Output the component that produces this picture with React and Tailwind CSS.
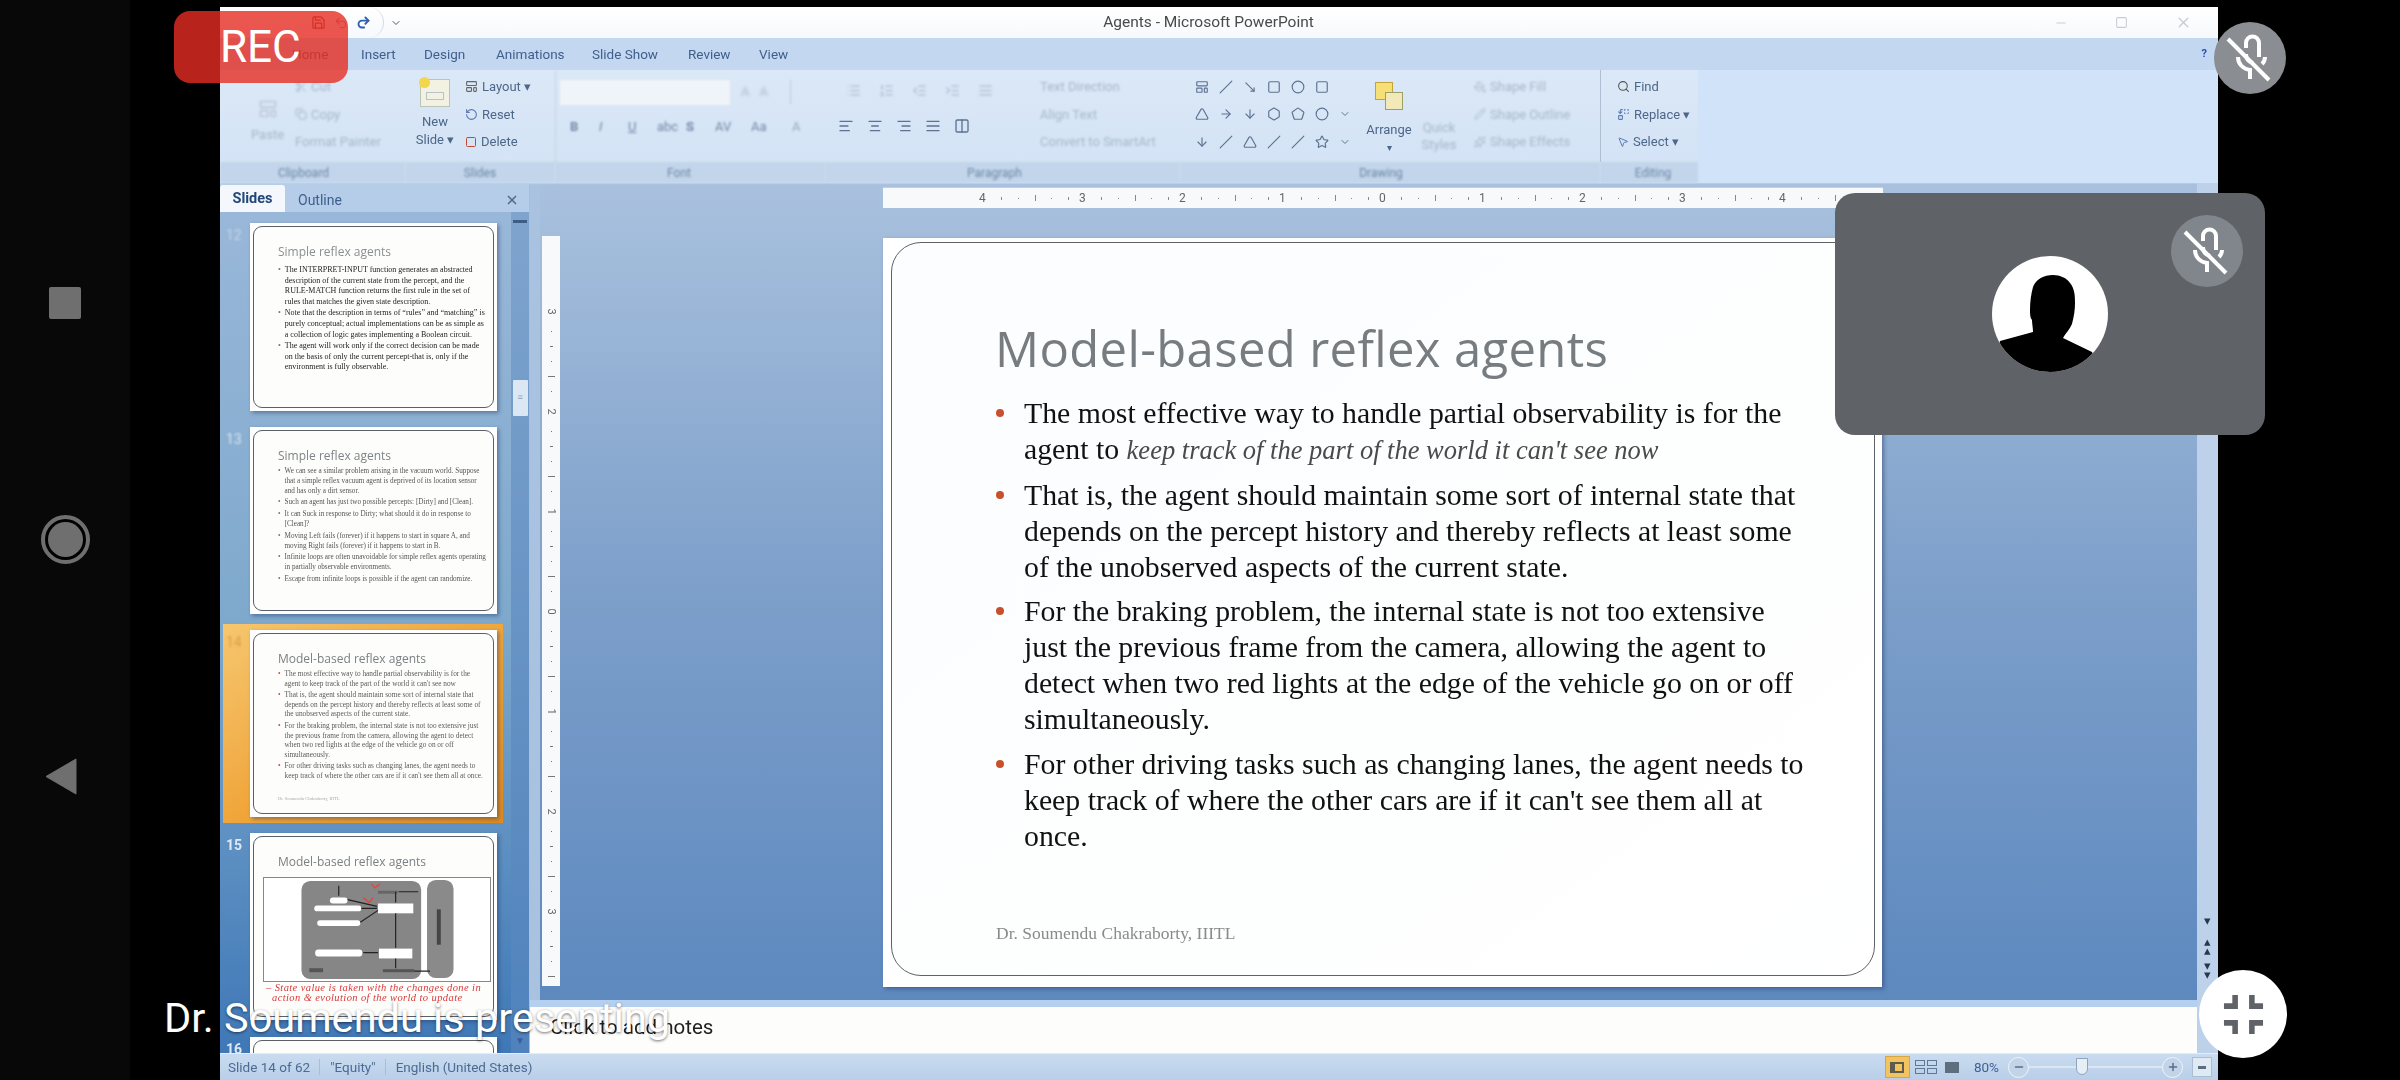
import React from "react";
import {
  Scissors, Copy, AlignLeft, AlignCenter, AlignRight, AlignJustify, Columns2, List, ListOrdered, Indent, Outdent,
  Square, Circle, Slash, Triangle, Star, ArrowRight, ArrowDown, Hexagon, Pentagon, MoveRight, ChevronDown, X, Minus, Plus,
  Search, Replace, MousePointer2, PaintBucket, Pencil, Sparkles, LayoutTemplate, RotateCcw, Redo2, Undo2, Save,
} from "lucide-react";

const MAIN = [
  [<>The most effective way to handle partial observability is for the</>, <>agent to <i className="text-[26.5px] text-[#4a4a4a]">keep track of the part of the world it can't see now</i></>],
  ["That is, the agent should maintain some sort of internal state that", "depends on the percept history and thereby reflects at least some", "of the unobserved aspects of the current state."],
  ["For the braking problem, the internal state is not too extensive", "just the previous frame from the camera, allowing the agent to", "detect when two red lights at the edge of the vehicle go on or off", "simultaneously."],
  ["For other driving tasks such as changing lanes, the agent needs to", "keep track of where the other cars are if it can't see them all at", "once."],
];

function MicOffIcon() {
  return (
    <svg viewBox="0 0 72 72" className="w-[72px] h-[72px]" fill="none" stroke="white" strokeWidth="4" strokeLinecap="butt">
      <path d="M32 26v-5a6.5 6.5 0 0 1 13 0v14" />
      <path d="M51 35c0 3-1 5-3 7" />
      <path d="M24 35c0 7 5 12 12 13v9" />
      <path d="M32 32c0 5 3 8 7 9" />
      <path d="M14 17l41 41" />
    </svg>
  );
}

function Avatar() {
  return (
    <svg viewBox="0 0 116 116" className="w-[116px] h-[116px]">
      <defs><clipPath id="avc"><circle cx="58" cy="58" r="58" /></clipPath></defs>
      <circle cx="58" cy="58" r="58" fill="white" />
      <path clipPath="url(#avc)" fill="black" d="M61 19C68 19 75 22 78 27C83 33 83 41 83 47C83 54 82 60 80 68C78 73 73 78 71 82L100 96L110 116H0L8 85L41 76C41 72 40 68 40 64C38 62 38 58 38 54C38 46 39 38 41 31C44 23 52 19 61 19Z" />
    </svg>
  );
}

function Thumb({ title, paras, className, titleClass, bodyClass, paraClass = "mb-[1px]", selected, children, footer }) {
  return (
    <div className={`w-[247px] bg-white p-[3px] shadow-[2px_2px_4px_rgba(30,50,90,0.45)] shrink-0 ${className}`}>
      <div className="h-full border-[1.5px] border-[#596066] rounded-[9px] pl-[24px] pr-[6px] pt-[16px] overflow-hidden bg-[#fdfdfb]">
        <div className={`font-['Open_Sans',sans-serif] text-[12px] leading-[18px] whitespace-nowrap blur-[0.5px] ${titleClass}`}>{title}</div>
        {paras && (
          <div className={`font-['Liberation_Serif',serif] blur-[0.55px] ${bodyClass}`}>
            {paras.map((p, i) => (
              <div key={i} className={`flex gap-[4px] ${paraClass}`}>
                <span className={selected ? "text-[#c8502c]" : "text-[#777]"}>•</span>
                <span>{p}</span>
              </div>
            ))}
          </div>
        )}
        {children}
        {footer && <div className="font-['Liberation_Serif',serif] text-[4.5px] text-[#aaa] mt-[15px] blur-[0.5px] whitespace-nowrap">Dr. Soumendu Chakraborty, IIITL</div>}
      </div>
    </div>
  );
}

function Diagram() {
  return (
    <svg viewBox="0 0 228 105" className="w-[228px] h-[105px] bg-white border border-[#888] blur-[0.5px] -ml-[15px] mt-[6px] shrink-0">
      <rect x="37" y="3" width="122" height="100" rx="9" fill="#868686" />
      <rect x="165" y="2" width="27" height="100" rx="9" fill="#8a8a8a" />
      <rect x="66" y="20" width="18" height="6" rx="3" fill="white" />
      <rect x="50" y="28" width="48" height="6" rx="3" fill="white" />
      <rect x="53" y="43" width="44" height="6" rx="3" fill="white" />
      <rect x="115" y="26" width="36" height="10" fill="white" />
      <rect x="51" y="73" width="48" height="7" rx="3" fill="white" />
      <rect x="116" y="72" width="34" height="10" fill="white" />
      <rect x="115" y="13" width="20" height="3" fill="#666" />
      <rect x="120" y="93" width="32" height="3" fill="#555" />
      <path d="M75 8v10M84 22l30 7M98 31h16M97 45l18-12M133 36v35M100 76h15M133 82v10M136 14h20M152 95h16M133 14v11" stroke="#222" strokeWidth="1.2" fill="none" />
      <path d="M100 20l6 5 4-5M108 6l4 4 5-4" stroke="#e2473f" strokeWidth="1.4" fill="none" />
      <rect x="175" y="32" width="4" height="36" fill="#444" />
      <rect x="45" y="92" width="14" height="4" fill="#555" />
    </svg>
  );
}

function RibbonLine({ icon, children, className = "" }) {
  return (
    <div className={`h-[27.5px] flex items-center gap-[4px] whitespace-nowrap ${className}`}>
      {icon}
      <span>{children}</span>
    </div>
  );
}

function Group({ width, label, children, className = "", labelClass = "" }) {
  return (
    <div className={`flex flex-col shrink-0 ${width}`}>
      <div className={`h-[92px] pt-[3px] flex ${className}`}>{children}</div>
      <div className={`h-[21px] bg-[#c2d5ea] flex items-center justify-center text-[12px] text-[#6d88a9] blur-[0.8px] ${labelClass}`}>{label}</div>
    </div>
  );
}

function TitleBar() {
  return (
    <div className="h-[31px] bg-gradient-to-b from-[#ffffff] to-[#f6f9fd] flex items-center relative shrink-0">
      <div className="w-[164px] h-[31px] flex items-center justify-end pr-[12px] gap-[8px] border-r border-[#d5dbe4] rounded-r-[16px] text-[#2f5fb0]">
        <Save size={15} className="text-[#9b3a3a] blur-[0.6px]" />
        <Undo2 size={14} className="text-[#b08a8a] blur-[0.6px]" />
        <Redo2 size={15} strokeWidth={3} className="blur-[0.5px]" />
      </div>
      <ChevronDown size={12} className="ml-[6px] text-[#555] blur-[0.4px]" />
      <div className="flex-1 text-center pr-[39px] font-['Roboto',sans-serif] text-[15.5px] text-[#4a4a4a] blur-[0.4px]">Agents - Microsoft PowerPoint</div>
      <div className="flex items-center gap-[47px] pr-[26px] text-[#c9ced6] blur-[0.5px]">
        <Minus size={14} />
        <Square size={13} />
        <X size={17} />
      </div>
    </div>
  );
}

function Tabs() {
  const tabs = [["Home", "w-[69px]"], ["Insert", "w-[63px]"], ["Design", "w-[72px]"], ["Animations", "w-[96px]"], ["Slide Show", "w-[96px]"], ["Review", "w-[71px]"], ["View", "w-[50px]"]];
  return (
    <div className="h-[32px] bg-[#c3d8f0] flex items-center font-['Roboto',sans-serif] text-[13.5px] text-[#3f5f8c] shrink-0 relative">
      <div className="flex items-center blur-[0.5px] pl-[72px]">
        {tabs.map(([t, w]) => <span key={t} className={`${w} whitespace-nowrap`}>{t}</span>)}
      </div>
      <span className="ml-auto mr-[11px] text-[11px] font-bold text-[#2a4bb0] blur-[0.5px]">?</span>
    </div>
  );
}

function Ribbon() {
  const faint = "text-[#a7b7ca] blur-[1px]";
  const ic = "text-[#5c7392] blur-[0.7px]";
  const fin = "text-[#aebdd0] blur-[0.9px]";
  return (
    <div className="h-[113px] bg-gradient-to-b from-[#dbe8f7] to-[#d2e2f5] flex font-['Roboto',sans-serif] text-[13px] text-[#4d6789] shrink-0">
      <Group width="w-[185px]" label="Clipboard" labelClass="pr-[18px]" className={`pl-[20px] ${faint}`}>
        <div className="w-[55px] flex flex-col items-center pt-[26px]">
          <LayoutTemplate size={20} className="text-[#bcc8d8]" />
          <span className="mt-[6px]">Paste</span>
        </div>
        <div className="flex flex-col">
          <RibbonLine icon={<Scissors size={12} />}>Cut</RibbonLine>
          <RibbonLine icon={<Copy size={12} />}>Copy</RibbonLine>
          <RibbonLine>Format Painter</RibbonLine>
        </div>
      </Group>
      <Group width="w-[150px]" label="Slides">
        <div className="w-[60px] flex flex-col items-center pt-[6px] leading-[18px] blur-[0.6px]">
          <div className="w-[30px] h-[28px] bg-[#f3f1e2] border border-[#bcc4b8] relative mb-[6px]">
            <div className="absolute -left-[2px] -top-[3px] w-[11px] h-[11px] rounded-full bg-[#f3d649]" />
            <div className="absolute left-[5px] right-[5px] top-[12px] h-[8px] border border-[#b9c2c7]" />
          </div>
          <span>New</span>
          <span className="whitespace-nowrap">Slide ▾</span>
        </div>
        <div className="flex flex-col blur-[0.6px]">
          <RibbonLine icon={<LayoutTemplate size={13} className="text-[#666]" />}>Layout ▾</RibbonLine>
          <RibbonLine icon={<RotateCcw size={13} className="text-[#5a7bb0]" />}>Reset</RibbonLine>
          <RibbonLine icon={<Square size={12} className="text-[#c24a3a]" />}>Delete</RibbonLine>
        </div>
      </Group>
      <Group width="w-[270px]" label="Font" labelClass="pr-[22px]" className="flex-col border-l border-[#c5d4e5] pl-[3px] blur-[0.8px]">
        <div className="h-[38px] flex items-center gap-[10px]">
          <div className="w-[172px] h-[27px] bg-[#eef4f9] border border-[#dde6ef]" />
          <span className={fin}>A</span>
          <span className={fin}>A</span>
          <span className="w-[1px] h-[24px] bg-[#bccbdc] ml-[12px]" />
        </div>
        <div className="h-[32px] flex items-center pl-[11px] text-[13px] text-[#7288a5]">
          <b className="w-[29px]">B</b><i className="w-[29px]">I</i><u className="w-[29px]">U</u><span className="w-[29px]">abc</span><b className="w-[29px]">S</b><span className="w-[36px]">AV</span><span className="w-[41px]">Aa</span><span className="text-[#9aa9bd]">A</span>
        </div>
      </Group>
      <Group width="w-[355px]" label="Paragraph" className="pl-[13px]" labelClass="pr-[16px]">
        <div className="flex flex-col w-[206px]">
          <div className={`h-[34px] flex items-center gap-[18px] pl-[8px] ${fin}`}>
            <List size={15} /><ListOrdered size={15} /><Outdent size={15} /><Indent size={15} /><AlignJustify size={15} />
          </div>
          <div className={`h-[30px] mt-[4px] flex items-center gap-[13px] ${ic}`}>
            <AlignLeft size={16} /><AlignCenter size={16} /><AlignRight size={16} /><AlignJustify size={16} /><Columns2 size={16} />
          </div>
        </div>
        <div className={`flex flex-col -ml-[4px] ${faint}`}>
          <RibbonLine>Text Direction</RibbonLine>
          <RibbonLine>Align Text</RibbonLine>
          <RibbonLine>Convert to SmartArt</RibbonLine>
        </div>
      </Group>
      <Group width="w-[420px]" label="Drawing" labelClass="pr-[18px]" className="pl-[15px]">
        <div className={`w-[170px] flex flex-col ${ic}`}>
          <div className="h-[27.5px] flex items-center gap-[10px]"><LayoutTemplate size={14} /><Slash size={14} /><MoveRight size={14} className="rotate-45" /><Square size={14} /><Circle size={14} /><Square size={14} /></div>
          <div className="h-[27.5px] flex items-center gap-[10px]"><Triangle size={14} /><ArrowRight size={14} /><ArrowDown size={14} /><Hexagon size={14} /><Pentagon size={14} /><Circle size={14} /><ChevronDown size={12} /></div>
          <div className="h-[27.5px] flex items-center gap-[10px]"><ArrowDown size={14} /><Slash size={14} /><Triangle size={14} /><Slash size={14} /><Slash size={14} /><Star size={14} /><ChevronDown size={12} /></div>
        </div>
        <div className="w-[60px] flex flex-col items-center pt-[9px] blur-[0.6px] -ml-[6px]">
          <div className="w-[28px] h-[28px] relative mb-[10px]">
            <div className="absolute left-0 top-0 w-[18px] h-[18px] bg-[#f6df74] border border-[#c2a23a]" />
            <div className="absolute right-0 bottom-0 w-[18px] h-[18px] bg-[#f1e9b8] border border-[#9aa06a]" />
          </div>
          <span>Arrange</span>
          <span className="text-[10px]">▾</span>
        </div>
        <div className={`w-[40px] flex flex-col items-center pt-[46px] leading-[17px] ${faint}`}>
          <span>Quick</span>
          <span>Styles</span>
        </div>
        <div className={`flex flex-col pl-[15px] ${faint}`}>
          <RibbonLine icon={<PaintBucket size={12} />}>Shape Fill</RibbonLine>
          <RibbonLine icon={<Pencil size={12} />}>Shape Outline</RibbonLine>
          <RibbonLine icon={<Sparkles size={12} />}>Shape Effects</RibbonLine>
        </div>
      </Group>
      <Group width="w-[98px]" label="Editing" labelClass="pl-[8px]" className="flex-col border-l border-[#aebfd4] pl-[16px] blur-[0.6px]">
        <RibbonLine icon={<Search size={13} className="text-[#555]" />}>Find</RibbonLine>
        <RibbonLine icon={<Replace size={13} className="text-[#5a7bb0]" />}>Replace ▾</RibbonLine>
        <RibbonLine icon={<MousePointer2 size={12} className="text-[#5a7bb0]" />}>Select ▾</RibbonLine>
      </Group>
      <div className="flex-1 bg-[#d0e3f8]" />
    </div>
  );
}

function SlidesPanel() {
  return (
    <div className="w-[310px] shrink-0 flex flex-col bg-gradient-to-b from-[#9bb8da] via-[#7ea9cc] to-[#3f78b7] border-r border-[#a7c0dd] overflow-hidden">
      <div className="h-[29px] flex items-end shrink-0 bg-[#b6cdea] pr-[10px]">
        <div className="w-[65px] h-[27px] bg-[#f4f8fc] rounded-t-[3px] flex items-center justify-center font-['Roboto',sans-serif] font-bold text-[14.5px] text-[#23477a] blur-[0.3px]">Slides</div>
        <div className="ml-[13px] h-[24px] flex items-center font-['Roboto',sans-serif] text-[14px] text-[#3c5f8f] blur-[0.45px]">Outline</div>
        <X size={14} strokeWidth={3} className="ml-auto mb-[5px] text-[#56708f] blur-[0.4px]" />
      </div>
      <div className="flex flex-1 min-h-0">
        <div className="w-[292px] flex flex-col relative pt-[11px] font-['Roboto',sans-serif] text-[14px] text-[#dbe7f2]">
          <div className="flex h-[188px] shrink-0">
            <span className="w-[30px] pl-[6px] pt-[2px] blur-[0.8px] text-[#c6d6e7]">12</span>
            <Thumb className="h-[188px]" title="Simple reflex agents" titleClass="text-[#8a8f93]" bodyClass="mt-[4px] text-[8px] leading-[10.6px] text-[#1c1c1c]" paras={[
              "The INTERPRET-INPUT function generates an abstracted description of the current state from the percept, and the RULE-MATCH function returns the first rule in the set of rules that matches the given state description.",
              "Note that the description in terms of “rules” and “matching” is purely conceptual; actual implementations can be as simple as a collection of logic gates implementing a Boolean circuit.",
              "The agent will work only if the correct decision can be made on the basis of only the current percept-that is, only if the environment is fully observable.",
            ]} />
          </div>
          <div className="flex h-[187px] shrink-0 mt-[16px]">
            <span className="w-[30px] pl-[6px] pt-[2px] blur-[0.8px]">13</span>
            <Thumb className="h-[187px]" title="Simple reflex agents" titleClass="text-[#7e8488]" paraClass="mb-[2px]" bodyClass="mt-[2px] text-[7.2px] leading-[9.8px] text-[#555]" paras={[
              "We can see a similar problem arising in the vacuum world. Suppose that a simple reflex vacuum agent is deprived of its location sensor and has only a dirt sensor.",
              "Such an agent has just two possible percepts: [Dirty] and [Clean].",
              "It can Suck in response to Dirty; what should it do in response to [Clean]?",
              "Moving Left fails (forever) if it happens to start in square A, and moving Right fails (forever) if it happens to start in B.",
              "Infinite loops are often unavoidable for simple reflex agents operating in partially observable environments.",
              "Escape from infinite loops is possible if the agent can randomize.",
            ]} />
          </div>
          <div className="flex h-[199px] shrink-0 mt-[10px] ml-[3px] w-[280px] bg-gradient-to-br from-[#f6c66e] via-[#f0a63a] to-[#e08a1d] pt-[6px]">
            <span className="w-[27px] pl-[3px] pt-[2px] blur-[0.8px] text-[#d9a24a]">14</span>
            <Thumb selected footer className="h-[187px]" title="Model-based reflex agents" titleClass="text-[#7a8084]" paraClass="mb-[2px]" bodyClass="mt-[1px] text-[7.3px] leading-[9.6px] text-[#5a5a5a]" paras={[
              "The most effective way to handle partial observability is for the agent to keep track of the part of the world it can't see now",
              "That is, the agent should maintain some sort of internal state that depends on the percept history and thereby reflects at least some of the unobserved aspects of the current state.",
              "For the braking problem, the internal state is not too extensive just the previous frame from the camera, allowing the agent to detect when two red lights at the edge of the vehicle go on or off simultaneously.",
              "For other driving tasks such as changing lanes, the agent needs to keep track of where the other cars are if it can't see them all at once.",
            ]} />
          </div>
          <div className="flex h-[187px] shrink-0 mt-[10px]">
            <span className="w-[30px] pl-[6px] pt-[2px] font-bold blur-[0.3px] text-[#dfe9f3]">15</span>
            <Thumb className="h-[187px]" title="Model-based reflex agents" titleClass="text-[#7a8084]">
              <Diagram />
              <div className="-ml-[12px] mt-[1px] font-['Liberation_Serif',serif] italic text-[10.5px] leading-[9.5px] tracking-[0.4px] text-[#d63a3a] blur-[0.35px] whitespace-nowrap">
                <div>– State value is taken with the changes done in</div>
                <div className="pl-[6px]">action &amp; evolution of the world to update</div>
              </div>
            </Thumb>
          </div>
          <div className="flex h-[30px] shrink-0 mt-[17px]">
            <span className="w-[30px] pl-[6px] pt-[2px] font-bold blur-[0.3px] text-[#dfe9f3]">16</span>
            <Thumb className="h-[40px]" title="" titleClass="" />
          </div>
        </div>
        <div className="w-[18px] bg-gradient-to-b from-[#7fa4cd] to-[#4f82bc] flex flex-col items-center relative">
          <div className="mt-[8px] w-[14px] h-[3px] bg-[#3d5c86] blur-[0.5px]" />
          <div className="mt-[157px] w-[15px] h-[36px] bg-[#dbe7f3] rounded-[1px] flex items-center justify-center text-[9px] text-[#8ea4bd]">≡</div>
          <div className="mt-auto mb-[5px] text-[10px] text-[#3a5f92] blur-[0.5px]">▼</div>
        </div>
      </div>
    </div>
  );
}

function HRuler() {
  return (
    <div className="ml-[343px] mt-[3px] w-[1000px] h-[21px] shrink-0 bg-[#f7f9fb] flex overflow-hidden font-['Roboto',sans-serif] text-[12px] text-[#666] blur-[0.6px] pl-[96px] border-t border-[#d9c9c9]">
      {[4, 3, 2, 1, 0, 1, 2, 3, 4].map((n, i) => (
        <div key={i} className="w-[100px] flex items-center justify-between pr-[10px] shrink-0">
          <span>{n}</span>
          <span className="w-[1px] h-[3px] bg-[#888]" />
          <span className="w-[1px] h-[1px] bg-[#888]" />
          <span className="w-[1px] h-[6px] bg-[#888]" />
          <span className="w-[1px] h-[1px] bg-[#888]" />
          <span className="w-[1px] h-[3px] bg-[#888]" />
        </div>
      ))}
    </div>
  );
}

function VRuler() {
  return (
    <div className="ml-[2px] mt-[28px] w-[18px] h-[750px] shrink-0 bg-[#f7f9fb] flex flex-col items-center overflow-hidden font-['Roboto',sans-serif] text-[11px] text-[#666] blur-[0.6px] pt-[70px]">
      {[3, 2, 1, 0, 1, 2, 3].map((n, i) => (
        <div key={i} className="h-[100px] flex flex-col items-center justify-between pb-[14px] shrink-0">
          <span className="rotate-90 leading-none">{n}</span>
          <span className="w-[1px] h-[1px] bg-[#777]" />
          <span className="w-[3px] h-[1px] bg-[#777]" />
          <span className="w-[1px] h-[1px] bg-[#777]" />
          <span className="w-[7px] h-[1px] bg-[#777]" />
          <span className="w-[1px] h-[1px] bg-[#777]" />
        </div>
      ))}
    </div>
  );
}

function Slide() {
  return (
    <div className="ml-[323px] mt-[30px] w-[999px] h-[749px] shrink-0 bg-white pl-[8px] pr-[7px] pt-[4px] pb-[11px] shadow-[2px_2px_4px_rgba(30,50,90,0.45)]">
      <div className="h-full border-[1.5px] border-[#5c6266] rounded-[30px] pl-[104px] pt-[73px] bg-gradient-to-br from-[#fbfdfe] to-[#ffffff] flex flex-col">
        <h1 className="font-['Open_Sans',sans-serif] text-[49px] leading-[64px] tracking-[0.35px] text-[#767c80] whitespace-nowrap blur-[0.35px] -ml-[1px]">Model-based reflex agents</h1>
        <div className="mt-[15px] font-['Liberation_Serif',serif] text-[29.8px] leading-[36px] text-[#111] blur-[0.3px] flex flex-col gap-[8.5px]">
          {MAIN.map((p, i) => (
            <div key={i} className="flex">
              <span className="w-[8px] h-[8px] rounded-full bg-[#c8502c] mt-[14px] mr-[20px] shrink-0" />
              <div className="whitespace-nowrap">
                {p.map((l, j) => <div key={j}>{l}</div>)}
              </div>
            </div>
          ))}
        </div>
        <div className="mt-auto mb-[29px] font-['Liberation_Serif',serif] text-[17.5px] text-[#8a8a8a] blur-[0.35px] whitespace-nowrap">Dr. Soumendu Chakraborty, IIITL</div>
      </div>
    </div>
  );
}

function StatusBar() {
  return (
    <div className="h-[27px] shrink-0 bg-gradient-to-b from-[#c9dbf0] to-[#b9cfe8] flex items-center font-['Roboto',sans-serif] text-[13.5px] text-[#4b6a94] border-t border-[#e4edf7]">
      <div className="flex items-center blur-[0.35px] pl-[8px] whitespace-nowrap">
        <span>Slide 14 of 62</span>
        <span className="w-[1px] h-[16px] bg-[#a9bdd6] ml-[9px] mr-[10px]" />
        <span>"Equity"</span>
        <span className="w-[1px] h-[16px] bg-[#a9bdd6] ml-[9px] mr-[10px]" />
        <span>English (United States)</span>
      </div>
      <div className="ml-auto flex items-center h-full pr-[6px] blur-[0.4px]">
        <div className="w-[25px] h-[22px] bg-[#f3c35f] border border-[#d7a544] flex items-center justify-center mr-[5px]">
          <div className="w-[14px] h-[11px] border-2 border-[#5d5d4f] border-l-[5px]" />
        </div>
        <div className="w-[22px] grid grid-cols-2 gap-[2px] mr-[8px]">
          <span className="h-[6px] border border-[#5f7896]" /><span className="h-[6px] border border-[#5f7896]" />
          <span className="h-[6px] border border-[#5f7896]" /><span className="h-[6px] border border-[#5f7896]" />
        </div>
        <div className="w-[14px] h-[11px] bg-[#5d6f7e] mr-[15px]" />
        <span className="mr-[9px] text-[#3f5f96]">80%</span>
        <div className="w-[21px] h-[21px] rounded-full border border-[#eef4fa] bg-[#c3d4e8] flex items-center justify-center"><Minus size={12} strokeWidth={3} className="text-[#5a6d88]" /></div>
        <div className="w-[133px] h-[2px] bg-[#dbe6f2] relative">
          <div className="absolute left-[47px] -top-[8px] w-[12px] h-[17px] bg-[#e6eef6] border border-[#8fa4bd] rounded-b-[6px]" />
        </div>
        <div className="w-[21px] h-[21px] rounded-full border border-[#eef4fa] bg-[#c3d4e8] flex items-center justify-center"><Plus size={12} strokeWidth={3} className="text-[#5a6d88]" /></div>
        <div className="w-[20px] h-[20px] ml-[9px] bg-[#dfeaf4] border border-[#aabdd3] flex items-center justify-center"><div className="w-[8px] h-[3px] bg-[#5d6f7e]" /></div>
      </div>
    </div>
  );
}

function Window() {
  return (
    <div className="w-[1998px] h-[1073px] mt-[7px] shrink-0 flex flex-col bg-[#c8daf0] overflow-hidden">
      <TitleBar />
      <Tabs />
      <Ribbon />
      <div className="flex flex-1 min-h-0">
        <SlidesPanel />
        <div className="flex-1 flex flex-col min-w-0 border-t border-[#bcc9dc]">
          <div className="flex-1 min-h-0 pl-[10px] bg-[#a9c2df] flex">
            <div className="flex-1 flex flex-col bg-gradient-to-b from-[#a9c1de] via-[#7d9fca] to-[#5d89bf] min-w-0">
              <HRuler />
              <div className="flex items-start">
                <VRuler />
                <Slide />
              </div>
            </div>
          </div>
          <div className="h-[53px] shrink-0 bg-[#fdfdfc] border-t-[7px] border-[#b5d0ee] pl-[20px] pb-[6px] flex items-center font-['Roboto',sans-serif] text-[20.5px] text-[#1f1f1f] blur-[0.3px]">Click to add notes</div>
        </div>
        <div className="w-[21px] shrink-0 bg-[#bdd2ea] flex flex-col items-center justify-end pb-[74px] text-[#26374f] text-[13px] leading-[9px] blur-[0.3px]">
          <span>▾</span>
          <div className="mt-[12px]">▴</div>
          <div>▴</div>
          <div className="mt-[6px]">▾</div>
          <div>▾</div>
        </div>
      </div>
      <StatusBar />
    </div>
  );
}

export default function App() {
  return (
    <div className="relative w-[2400px] h-[1080px] bg-black flex overflow-hidden font-['Roboto',sans-serif]">
      <div className="w-[130px] h-full bg-[#080808] shrink-0 flex flex-col items-center pt-[287px]">
        <div className="w-[32px] h-[32px] bg-[#6f6f6f] rounded-[2px]" />
        <div className="mt-[196px] w-[49px] h-[49px] rounded-full border-[4px] border-[#6f6f6f] p-[3px] bg-black">
          <div className="w-full h-full rounded-full bg-[#6f6f6f]" />
        </div>
        <svg viewBox="0 0 32 37" className="mt-[194px] -ml-[8px] w-[32px] h-[37px]">
          <path d="M1 18.5 31 1V36Z" fill="#6f6f6f" stroke="#6f6f6f" strokeLinejoin="round" />
        </svg>
      </div>
      <div className="w-[90px] shrink-0" />
      <Window />

      <div className="absolute left-[174px] top-[11px] w-[174px] h-[72px] rounded-[16px] bg-[rgba(230,45,35,0.8)] flex items-center pl-[46px] text-[44px] text-white leading-none">REC</div>
      <div className="absolute left-[2214px] top-[22px] w-[72px] h-[72px] rounded-full bg-[#8a8d91]"><MicOffIcon /></div>
      <div className="absolute left-[1835px] top-[193px] w-[430px] h-[242px] rounded-[20px] bg-[#5f6368]">
        <div className="absolute left-[336px] top-[22px] w-[72px] h-[72px] rounded-full bg-[#80868b]"><MicOffIcon /></div>
        <div className="flex justify-center pt-[63px]"><Avatar /></div>
      </div>
      <div className="absolute left-[2199px] top-[970px] w-[88px] h-[88px] rounded-full bg-white flex items-center justify-center">
        <svg viewBox="0 0 24 24" className="w-[67px] h-[67px]" fill="#5f6368"><path d="M5 16h3v3h2v-5H5v2zm3-8H5v2h5V5H8v3zm6 11h2v-3h3v-2h-5v5zm2-11V5h-2v5h5V8h-3z" /></svg>
      </div>
      <div className="absolute left-[164px] top-[994px] text-[41.5px] leading-[48px] text-white whitespace-nowrap [text-shadow:0_1px_3px_rgba(0,0,0,0.55)]">Dr. Soumendu is presenting</div>
    </div>
  );
}
